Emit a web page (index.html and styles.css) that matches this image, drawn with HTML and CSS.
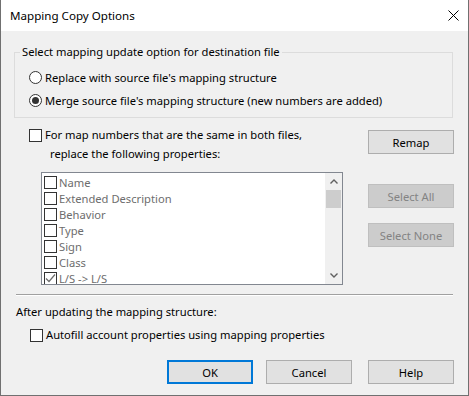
FILE: index.html
```html
<!DOCTYPE html>
<html lang="en">
<head>
  <meta charset="UTF-8" />
  <title>Mapping Copy Options</title>
  <link rel="stylesheet" href="styles.css">
</head>
<body>

<div class="window">
  <!-- Title bar -->
  <div class="titlebar">
    <span class="title">Mapping Copy Options</span>
    <svg class="close" width="11" height="11" viewBox="0 0 11 11">
      <path d="M0.5 0.5 L10.5 10.5 M10.5 0.5 L0.5 10.5" stroke="#000" stroke-width="1" fill="none"/>
    </svg>
  </div>

  <div class="content">
    <!-- Update option group -->
    <fieldset class="group">
      <legend>Select mapping update option for destination file</legend>
      <div class="radios">
        <label class="option"><span class="radio"></span>Replace with source file's mapping structure</label>
        <label class="option"><span class="radio checked"></span>Merge source file's mapping structure (new numbers are added)</label>
      </div>
    </fieldset>

    <!-- Properties to replace -->
    <div class="middle">
      <div class="left">
        <label class="option line"><span class="check"></span>For map numbers that are the same in both files,</label>
        <div class="line indent">replace the following properties:</div>
        <div class="listbox">
          <div class="items">
            <div class="item"><span class="check"></span>Name</div>
            <div class="item"><span class="check"></span>Extended Description</div>
            <div class="item"><span class="check"></span>Behavior</div>
            <div class="item"><span class="check"></span>Type</div>
            <div class="item"><span class="check"></span>Sign</div>
            <div class="item"><span class="check"></span>Class</div>
            <div class="item"><span class="check on">
              <svg width="11" height="11" viewBox="0 0 11 11"><path d="M1 5.5 L4 8.5 L10 1.5" stroke="#6d6d6d" stroke-width="1.2" fill="none"/></svg>
            </span>L/S -&gt; L/S</div>
          </div>
          <div class="scrollbar">
            <div class="arrow">
              <svg width="8" height="5" viewBox="0 0 8 5"><path d="M0.5 4.5 L4 1 L7.5 4.5" stroke="#606060" stroke-width="1.4" fill="none"/></svg>
            </div>
            <div class="track"><div class="thumb"></div></div>
            <div class="arrow">
              <svg width="8" height="5" viewBox="0 0 8 5"><path d="M0.5 0.5 L4 4 L7.5 0.5" stroke="#606060" stroke-width="1.4" fill="none"/></svg>
            </div>
          </div>
        </div>
      </div>
      <div class="right">
        <button class="btn">Remap</button>
        <button class="btn disabled select-all">Select All</button>
        <button class="btn disabled">Select None</button>
      </div>
    </div>

    <div class="separator"></div>

    <div class="line after">After updating the mapping structure:</div>
    <label class="option line autofill"><span class="check"></span>Autofill account properties using mapping properties</label>

    <!-- Dialog buttons -->
    <div class="actions">
      <button class="btn default">OK</button>
      <button class="btn">Cancel</button>
      <button class="btn help">Help</button>
    </div>
  </div>
</div>

</body>
</html>
```

FILE: styles.css
```css
* { margin: 0; padding: 0; box-sizing: border-box; }
body {
  font-family: "Segoe UI", "Noto Sans", sans-serif;
  font-size: 11.2px;
  color: #000;
  background: #f0f0f0;
}
.window {
  width: 469px; height: 396px;
  display: flex; flex-direction: column;
  border: 1px solid #707070;
  border-top: none;
  background: #f0f0f0;
}
.titlebar {
  height: 31px;
  background: #fff;
  display: flex; align-items: center;
  justify-content: space-between;
  padding: 0 9px 0 9px;
}
.title { font-size: 11.6px; }
.content {
  flex: 1;
  display: flex; flex-direction: column;
  padding: 13px 14px 0 13px;
}
.group {
  border: 1px solid #dcdcdc;
  min-width: 0;
  width: 439px;
}
.group legend {
  margin-left: 5px;
  padding: 0 2px;
  line-height: 16px;
}
.radios {
  padding: 6px 0 5px 14px;
}
.option {
  display: flex; align-items: center;
  height: 23px;
}
.radio {
  width: 13px; height: 13px;
  border: 1px solid #333;
  border-radius: 50%;
  background: #fff;
  margin-right: 3px;
  display: flex; align-items: center; justify-content: center;
}
.radio.checked::after {
  content: "";
  width: 7px; height: 7px;
  border-radius: 50%;
  background: #333;
}
.check {
  width: 13px; height: 13px;
  border: 1px solid #333;
  background: #fff;
  margin-right: 3px;
  display: flex; align-items: center; justify-content: center;
  flex-shrink: 0;
}
.middle {
  display: flex;
  justify-content: space-between;
  padding-top: 9px;
}
.left { padding-left: 15px; }
.line { height: 16px; line-height: 16px; }
.left .line + .line { margin-top: 3px; }
.indent { padding-left: 21px; }
.listbox {
  margin-top: 10px;
  margin-left: 12px;
  width: 302px; height: 113px;
  border: 1px solid #828790;
  background: #fff;
  display: flex;
  overflow: hidden;
}
.items {
  flex: 1;
  padding: 1px 0 0 2px;
  color: #6d6d6d;
}
.item {
  display: flex; align-items: center;
  height: 16px;
}
.item .check { margin-right: 2px; }
.scrollbar {
  width: 17px;
  background: #f0f0f0;
  display: flex; flex-direction: column;
}
.arrow {
  height: 17px;
  display: flex; align-items: center; justify-content: center;
}
.track { flex: 1; }
.thumb {
  height: 18px;
  margin: 0 1px;
  background: #cdcdcd;
}
.right {
  display: flex; flex-direction: column;
  padding-top: 3px;
}
.btn {
  width: 86px; height: 24px;
  font-family: inherit;
  font-size: 11.2px;
  color: #000;
  background: #e1e1e1;
  border: 1px solid #adadad;
}
.btn.disabled {
  background: #cccccc;
  border-color: #bfbfbf;
  color: #838383;
}
.select-all { margin-top: 30px; margin-bottom: 15px; }
.btn.default {
  border: 2px solid #0078d7;
}
.separator {
  margin-top: 9px;
  margin-left: 2px;
  width: 437px;
  border-top: 1px solid #a0a0a0;
  border-bottom: 1px solid #fff;
}
.after { margin-top: 8px; margin-left: 2px; }
.autofill { margin-top: 7px; margin-left: 16px; height: 16px; }
.actions {
  display: flex; justify-content: flex-end;
  gap: 13px;
  margin-top: 17px;
}
.help { margin-left: 3px; }
```
